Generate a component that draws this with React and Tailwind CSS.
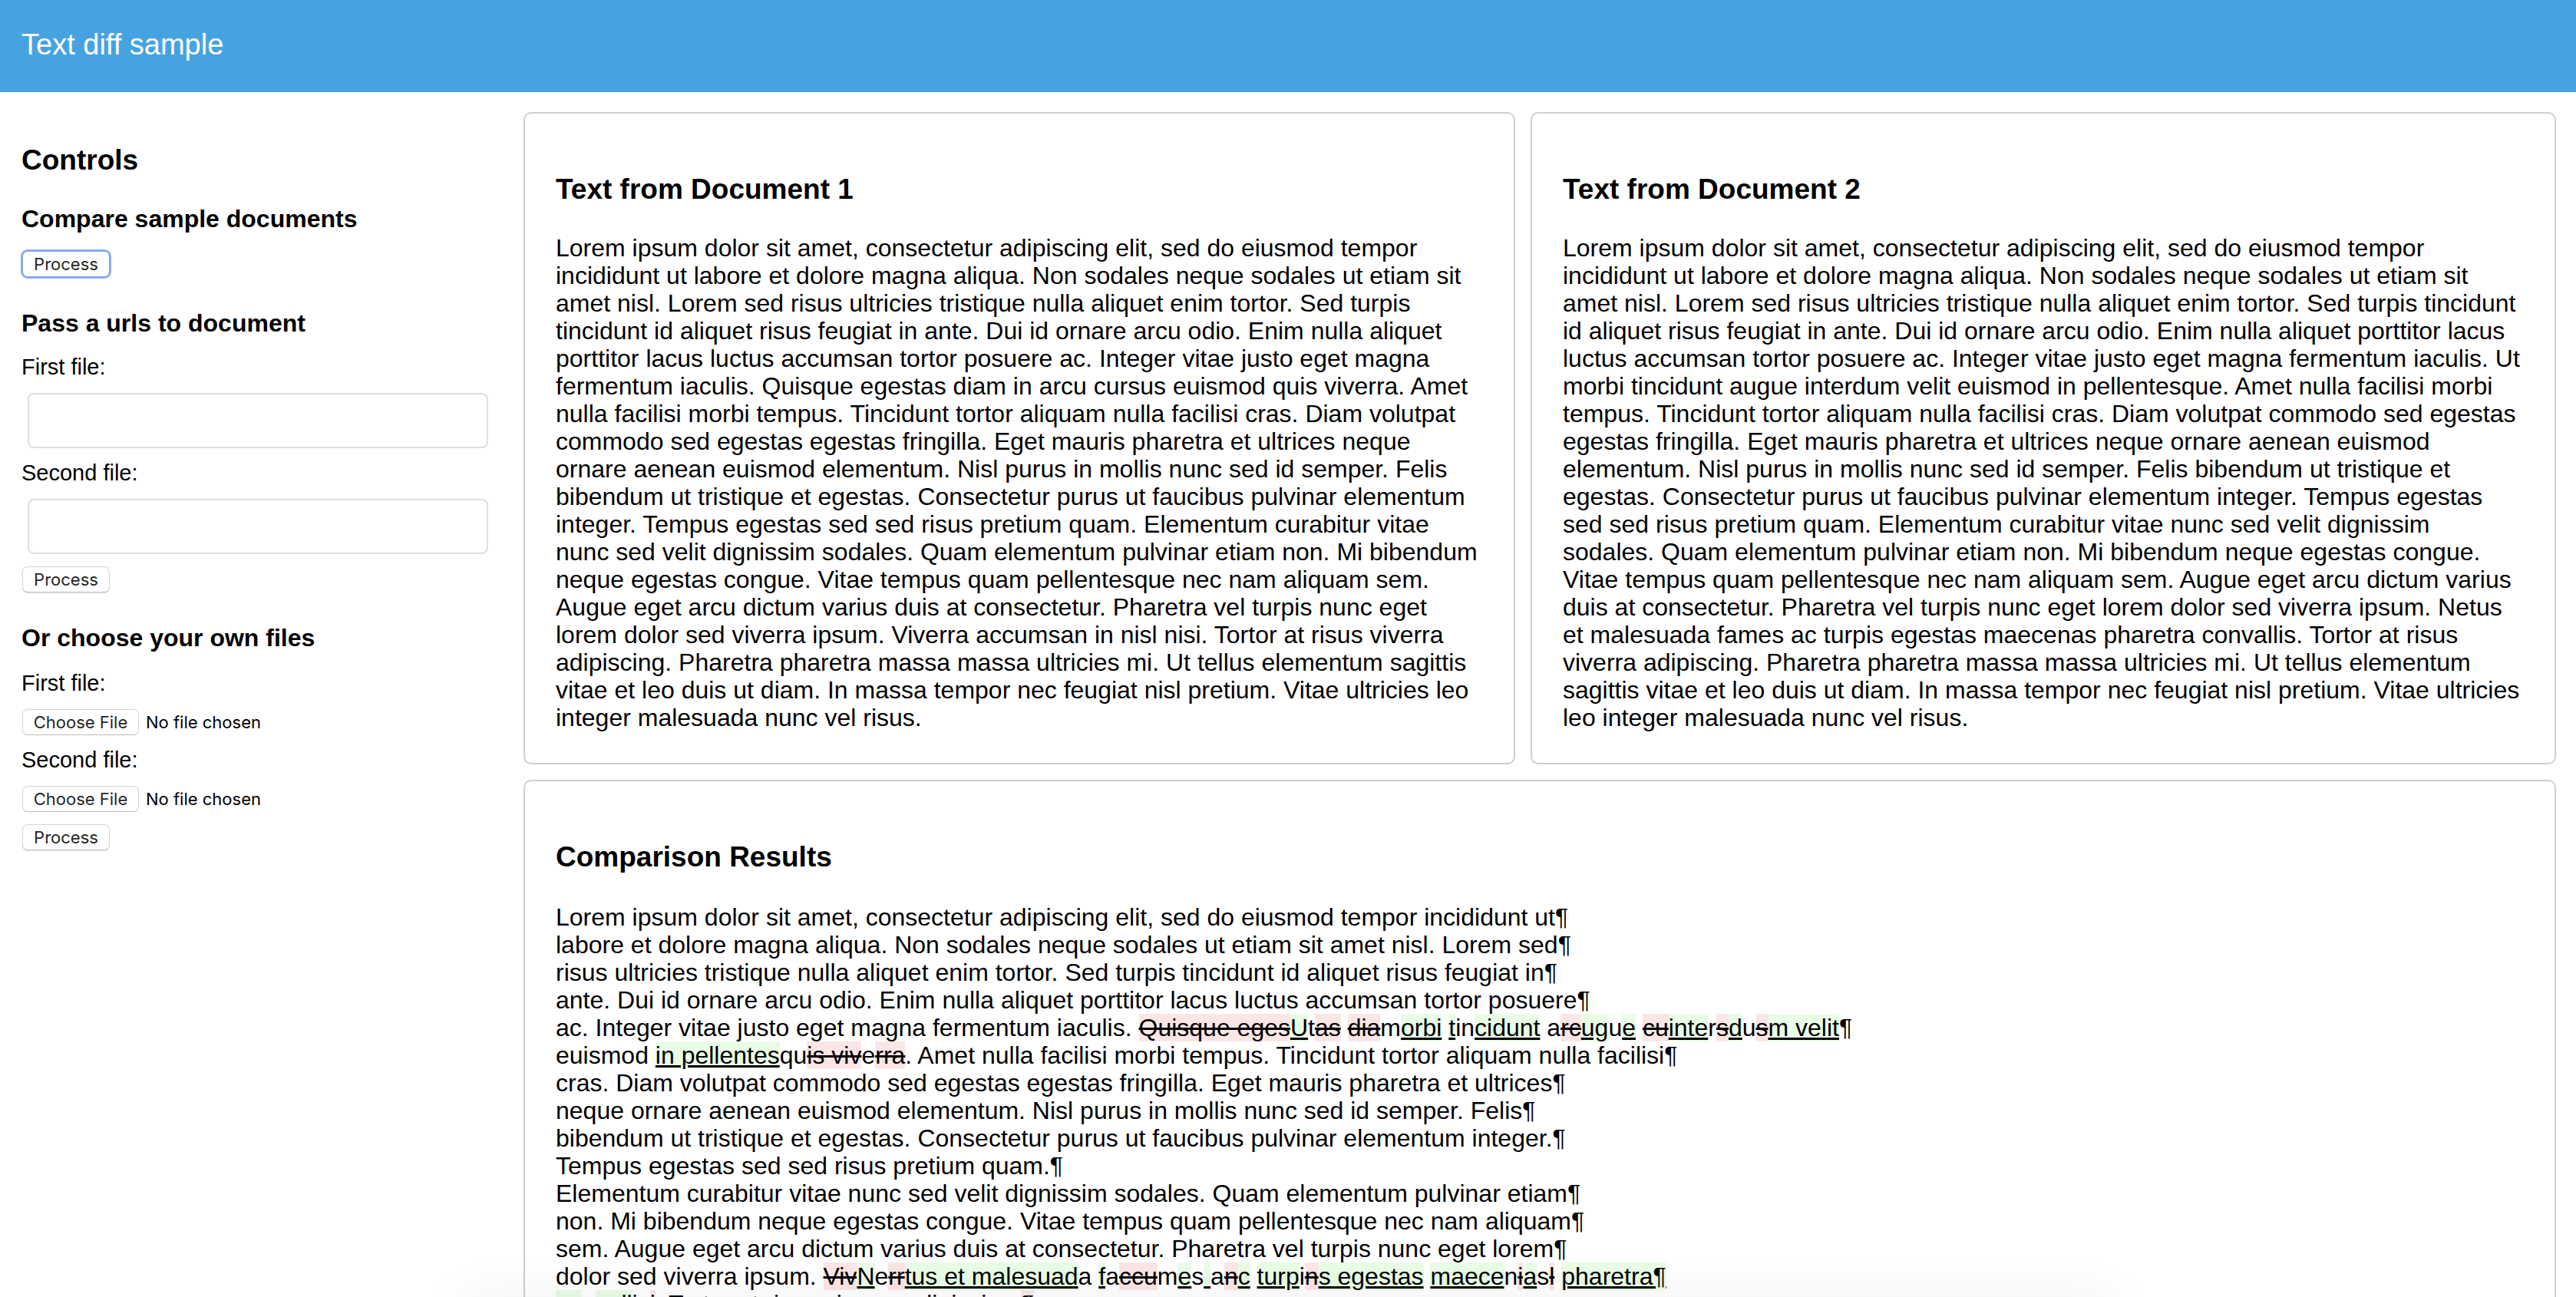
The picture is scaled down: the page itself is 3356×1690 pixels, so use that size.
const DOC_1 =
  "Lorem ipsum dolor sit amet, consectetur adipiscing elit, sed do eiusmod tempor incididunt ut labore et dolore magna aliqua. Non sodales neque sodales ut etiam sit amet nisl. Lorem sed risus ultricies tristique nulla aliquet enim tortor. Sed turpis tincidunt id aliquet risus feugiat in ante. Dui id ornare arcu odio. Enim nulla aliquet porttitor lacus luctus accumsan tortor posuere ac. Integer vitae justo eget magna fermentum iaculis. Quisque egestas diam in arcu cursus euismod quis viverra. Amet nulla facilisi morbi tempus. Tincidunt tortor aliquam nulla facilisi cras. Diam volutpat commodo sed egestas egestas fringilla. Eget mauris pharetra et ultrices neque ornare aenean euismod elementum. Nisl purus in mollis nunc sed id semper. Felis bibendum ut tristique et egestas. Consectetur purus ut faucibus pulvinar elementum integer. Tempus egestas sed sed risus pretium quam. Elementum curabitur vitae nunc sed velit dignissim sodales. Quam elementum pulvinar etiam non. Mi bibendum neque egestas congue. Vitae tempus quam pellentesque nec nam aliquam sem. Augue eget arcu dictum varius duis at consectetur. Pharetra vel turpis nunc eget lorem dolor sed viverra ipsum. Viverra accumsan in nisl nisi. Tortor at risus viverra adipiscing. Pharetra pharetra massa massa ultricies mi. Ut tellus elementum sagittis vitae et leo duis ut diam. In massa tempor nec feugiat nisl pretium. Vitae ultricies leo integer malesuada nunc vel risus.";

const DOC_2 =
  "Lorem ipsum dolor sit amet, consectetur adipiscing elit, sed do eiusmod tempor incididunt ut labore et dolore magna aliqua. Non sodales neque sodales ut etiam sit amet nisl. Lorem sed risus ultricies tristique nulla aliquet enim tortor. Sed turpis tincidunt id aliquet risus feugiat in ante. Dui id ornare arcu odio. Enim nulla aliquet porttitor lacus luctus accumsan tortor posuere ac. Integer vitae justo eget magna fermentum iaculis. Ut morbi tincidunt augue interdum velit euismod in pellentesque. Amet nulla facilisi morbi tempus. Tincidunt tortor aliquam nulla facilisi cras. Diam volutpat commodo sed egestas egestas fringilla. Eget mauris pharetra et ultrices neque ornare aenean euismod elementum. Nisl purus in mollis nunc sed id semper. Felis bibendum ut tristique et egestas. Consectetur purus ut faucibus pulvinar elementum integer. Tempus egestas sed sed risus pretium quam. Elementum curabitur vitae nunc sed velit dignissim sodales. Quam elementum pulvinar etiam non. Mi bibendum neque egestas congue. Vitae tempus quam pellentesque nec nam aliquam sem. Augue eget arcu dictum varius duis at consectetur. Pharetra vel turpis nunc eget lorem dolor sed viverra ipsum. Netus et malesuada fames ac turpis egestas maecenas pharetra convallis. Tortor at risus viverra adipiscing. Pharetra pharetra massa massa ultricies mi. Ut tellus elementum sagittis vitae et leo duis ut diam. In massa tempor nec feugiat nisl pretium. Vitae ultricies leo integer malesuada nunc vel risus.";

// Each line is a list of segments: "=" kept, "-" deleted, "+" inserted.
const DIFF = [
  ["=Lorem ipsum dolor sit amet, consectetur adipiscing elit, sed do eiusmod tempor incididunt ut¶"],
  ["=labore et dolore magna aliqua. Non sodales neque sodales ut etiam sit amet nisl. Lorem sed¶"],
  ["=risus ultricies tristique nulla aliquet enim tortor. Sed turpis tincidunt id aliquet risus feugiat in¶"],
  ["=ante. Dui id ornare arcu odio. Enim nulla aliquet porttitor lacus luctus accumsan tortor posuere¶"],
  [
    "=ac. Integer vitae justo eget magna fermentum iaculis. ", "-Quisque eges", "+U", "=t", "-as", "= ", "-dia", "=m",
    "+orbi", "= ", "+t", "=in", "+cidunt", "= a", "-rc", "+ug", "=u", "+e", "= ", "-cu", "+inte", "=r", "-s", "+d",
    "=u", "-s", "+m velit", "=¶",
  ],
  ["=euismod ", "+in pellentes", "=qu", "-is viv", "=e", "-rra", "=. Amet nulla facilisi morbi tempus. Tincidunt tortor aliquam nulla facilisi¶"],
  ["=cras. Diam volutpat commodo sed egestas egestas fringilla. Eget mauris pharetra et ultrices¶"],
  ["=neque ornare aenean euismod elementum. Nisl purus in mollis nunc sed id semper. Felis¶"],
  ["=bibendum ut tristique et egestas. Consectetur purus ut faucibus pulvinar elementum integer.¶"],
  ["=Tempus egestas sed sed risus pretium quam.¶"],
  ["=Elementum curabitur vitae nunc sed velit dignissim sodales. Quam elementum pulvinar etiam¶"],
  ["=non. Mi bibendum neque egestas congue. Vitae tempus quam pellentesque nec nam aliquam¶"],
  ["=sem. Augue eget arcu dictum varius duis at consectetur. Pharetra vel turpis nunc eget lorem¶"],
  [
    "=dolor sed viverra ipsum. ", "-Viv", "+N", "=e", "-rr", "+tus et malesuad", "=a ", "+f", "=a", "-ccu", "=m", "+e",
    "=s", "+ ", "=a", "-n", "+c", "= ", "+turp", "=i", "-n", "+s egestas", "= ", "+maece", "=n", "-i", "+a", "=s", "-l",
    "= ", "+pharetra¶",
  ],
  ["+co", "=n", "+vall", "=is", "-i", "=. Tortor at risus viverra adipiscing.", "-¶"],
];

function Segment({ value }) {
  const text = value.slice(1);
  if (value[0] === "-") return <del className="bg-[#fbe6e5] line-through">{text}</del>;
  if (value[0] === "+") return <ins className="bg-[#e9fde6] underline">{text}</ins>;
  return <span>{text}</span>;
}

function Card({ title, className = "", children }) {
  return (
    <section className={`rounded-[10px] border-2 border-[#cecece] px-10 pt-10 pb-[41px] ${className}`}>
      <h2 className="mt-[38px] mb-[37px] text-[37px] leading-[42px] font-bold">{title}</h2>
      {children}
    </section>
  );
}

function ProcessButton({ focused = false, className = "" }) {
  return (
    <button
      type="button"
      className={`ml-px block h-[34px] w-[114px] rounded-[7px] border bg-white font-[Inter,sans-serif] text-[22px] leading-8 text-[#262626] ${className} ${
        focused
          ? "border-[#7ba2e6] ring-2 ring-[#8cb0f1]"
          : "border-[#d6d6d6] border-b-[#bdbdbd] shadow-[0_1px_1px_rgba(0,0,0,0.12)]"
      }`}
    >
      Process
    </button>
  );
}

function UrlField({ id, label }) {
  return (
    <div>
      <label htmlFor={id} className="block text-[29px] leading-[38px]">{label}</label>
      <div className="px-2 pt-[15px] pb-[13px]">
        <input id={id} type="text" className="block h-[72px] w-full rounded-lg border-2 border-[#dfdfdf] px-4" />
      </div>
    </div>
  );
}

function FileField({ id, label }) {
  return (
    <div>
      <label htmlFor={id} className="block text-[29px] leading-[38px]">{label}</label>
      <input
        id={id}
        type="file"
        className="mt-[15px] mb-[13px] ml-px block h-[34px] w-full font-[Inter,sans-serif] text-[22px] leading-[34px] file:mr-[9px] file:h-[34px] file:w-[152px] file:rounded-[7px] file:border file:border-solid file:border-[#d6d6d6] file:border-b-[#bdbdbd] file:bg-white file:p-0 file:leading-8 file:text-[#262626]"
      />
    </div>
  );
}

export default function App() {
  return (
    <div className="relative h-screen overflow-hidden bg-white font-['Liberation_Sans',Arial,sans-serif] text-[32px] leading-9 text-black">
      <header className="flex h-[120px] items-center bg-[#47a3df] px-7 pb-1 text-white">
        <h1 className="text-[38px] leading-[44px]">Text diff sample</h1>
      </header>
      <div className="flex">
        <aside className="w-[682px] shrink-0 pt-[68px] pr-[38px] pl-7">
          <h2 className="text-[37px] leading-[42px] font-bold">Controls</h2>
          <h3 className="mt-[37px] mb-6 font-bold">Compare sample documents</h3>
          <ProcessButton focused />
          <h3 className="mt-[42px] mb-5 font-bold">Pass a urls to document</h3>
          <UrlField id="url-1" label="First file:" />
          <UrlField id="url-2" label="Second file:" />
          <ProcessButton className="mt-[3px]" />
          <h3 className="mt-[41px] mb-[22px] font-bold">Or choose your own files</h3>
          <FileField id="file-1" label="First file:" />
          <FileField id="file-2" label="Second file:" />
          <ProcessButton className="mt-4" />
        </aside>
        <main className="grid grow grid-cols-[1292fr_1336fr] gap-5 pt-[26px] pr-[26px]">
          <Card title="Text from Document 1"><p>{DOC_1}</p></Card>
          <Card title="Text from Document 2"><p>{DOC_2}</p></Card>
          <Card title="Comparison Results" className="col-span-2">
            <div className="mt-[39px] whitespace-pre">
              {DIFF.map((line, i) => (
                <div key={i}>{line.map((s, j) => <Segment key={j} value={s} />)}</div>
              ))}
            </div>
          </Card>
        </main>
      </div>
      {/* Soft shade along the bottom edge */}
      <div className="pointer-events-none absolute top-full right-[18%] left-[18%] h-20 shadow-[0_0_70px_rgba(0,0,0,0.06)]" />
    </div>
  );
}
